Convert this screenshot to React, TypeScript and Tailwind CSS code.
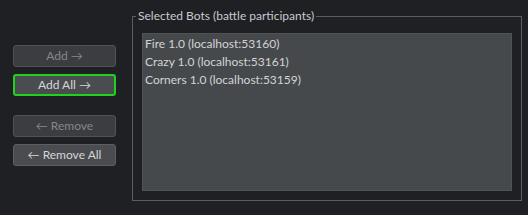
import React from "react";

const font = { fontFamily: 'Lato, "Noto Sans", sans-serif' };

export default function App() {
  const bots = [
    "Fire 1.0 (localhost:53160)",
    "Crazy 1.0 (localhost:53161)",
    "Corners 1.0 (localhost:53159)",
  ];
  return (
    <div
      className="w-[528px] h-[215px] bg-[#1f2024] flex text-[12px]"
      style={font}
    >
      <div className="ml-[13px] mt-[45px] w-[103px] flex flex-col">
        <button className="h-[22px] rounded-[3px] border border-[#505255] bg-[#3b3d40] text-[#85878a] leading-none">
          Add →
        </button>
        <button className="mt-[7px] h-[22px] rounded-[3px] border-2 border-[#1ed21e] bg-[#4a4c4f] text-[#d4d6d8] leading-none">
          Add All →
        </button>
        <button className="mt-[19px] h-[22px] rounded-[3px] border border-[#505255] bg-[#3b3d40] text-[#85878a] leading-none">
          ← Remove
        </button>
        <button className="mt-[7px] h-[22px] rounded-[3px] border border-[#5c5e61] bg-[#4a4c4f] text-[#d4d6d8] leading-none">
          ← Remove All
        </button>
      </div>
      <fieldset className="ml-[16px] mt-[8px] w-[390px] h-[193px] border border-[#5b5d60] px-[9px] pb-[9px] flex flex-col">
        <legend className="ml-[-6px] px-[2px] h-[16px] leading-[16px] text-[#c8cacc]">
          Selected Bots (battle participants)
        </legend>
        <div className="mt-[9px] flex-1 bg-[#46494c] border border-[#505356] pl-[2px] pt-[1px]">
          {bots.map((b) => (
            <div key={b} className="h-[18px] leading-[18px] text-[#d2d4d6]">
              {b}
            </div>
          ))}
        </div>
      </fieldset>
    </div>
  );
}
